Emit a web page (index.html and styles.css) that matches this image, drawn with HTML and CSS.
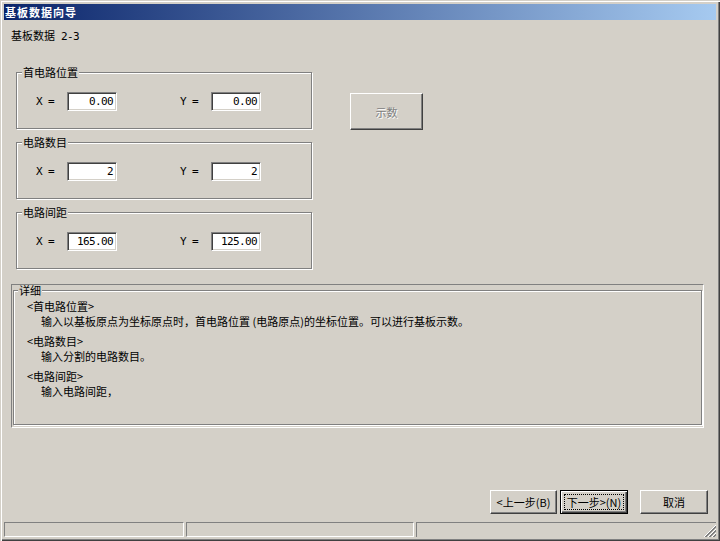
FILE: index.html
```html
<!DOCTYPE html>
<html lang="zh-CN">
<head>
<meta charset="utf-8">
<title>基板数据向导</title>
<link rel="stylesheet" href="styles.css">
</head>
<body>
<div class="window">
  <div class="titlebar"><span class="title">基板数据向导</span></div>
  <div class="client">
    <div class="step">基板数据<span class="lat"> 2-3</span></div>
    <div class="top">
      <div class="groups">
        <fieldset class="group">
          <legend>首电路位置</legend>
          <div class="row">
            <span class="lbl lat">X =</span><div class="edit lat">0.00</div>
            <span class="lbl lbl-y lat">Y =</span><div class="edit lat">0.00</div>
          </div>
        </fieldset>
        <fieldset class="group">
          <legend>电路数目</legend>
          <div class="row">
            <span class="lbl lat">X =</span><div class="edit lat">2</div>
            <span class="lbl lbl-y lat">Y =</span><div class="edit lat">2</div>
          </div>
        </fieldset>
        <fieldset class="group">
          <legend>电路间距</legend>
          <div class="row">
            <span class="lbl lat">X =</span><div class="edit lat">165.00</div>
            <span class="lbl lbl-y lat">Y =</span><div class="edit lat">125.00</div>
          </div>
        </fieldset>
      </div>
      <button class="btn btn-show" disabled>示数</button>
    </div>
    <div class="detail-frame">
      <fieldset class="detail">
        <legend>详细</legend>
        <div class="detail-body">
          <div class="sec">
            <div class="hd">&lt;首电路位置&gt;</div>
            <div class="tx">输入以基板原点为坐标原点时，首电路位置 (电路原点)的坐标位置。可以进行基板示数。</div>
          </div>
          <div class="sec">
            <div class="hd">&lt;电路数目&gt;</div>
            <div class="tx">输入分割的电路数目。</div>
          </div>
          <div class="sec sec-last">
            <div class="hd">&lt;电路间距&gt;</div>
            <div class="tx">输入电路间距，</div>
          </div>
        </div>
      </fieldset>
    </div>
    <div class="actions">
      <button class="btn btn-back">&lt;上一步(B)</button>
      <button class="btn btn-next"><span class="focus">下一步&gt;(N)</span></button>
      <button class="btn btn-cancel">取消</button>
    </div>
  </div>
  <div class="statusbar">
    <div class="panel p1"></div>
    <div class="panel p2"></div>
    <div class="panel p3">
      <svg class="grip" width="12" height="12" viewBox="0 0 12 12" shape-rendering="crispEdges">
        <path d="M12 0 0 12M12 4 4 12M12 8 8 12" stroke="#ffffff" stroke-width="1"/>
        <path d="M12 1 1 12M12 2 2 12M12 5 5 12M12 6 6 12M12 9 9 12M12 10 10 12" stroke="#808080" stroke-width="1"/>
      </svg>
    </div>
  </div>
</div>
</body>
</html>
```
FILE: styles.css
```css
html, body {
  margin: 0;
  padding: 0;
  background: #d4d0c8;
}

body {
  font-family: "Noto Sans CJK SC", "Noto Sans", sans-serif;
  font-size: 11px;
  color: #000;
}

.window {
  width: 720px;
  height: 541px;
  box-sizing: border-box;
  padding: 4px;
  background: #d4d0c8;
  box-shadow: inset 1px 1px #d4d0c8, inset 2px 2px #ffffff, inset -1px -1px #404040, inset -2px -2px #808080;
  display: flex;
  flex-direction: column;
}

.titlebar {
  height: 16px;
  background: linear-gradient(to right, #0a246a, #a6caf0);
  display: flex;
  align-items: center;
  padding-left: 1px;
}

.title {
  color: #fff;
  font-weight: bold;
  font-size: 11px;
  letter-spacing: 1px;
  line-height: 16px;
}

.client {
  flex: 1;
  display: flex;
  flex-direction: column;
  padding: 8px 8px 8px 7px;
  min-height: 0;
}

.step {
  line-height: 14px;
  height: 14px;
}

.lat {
  font-family: "DejaVu Sans Mono", "Liberation Mono", monospace;
  font-size: 11px;
  letter-spacing: -0.62px;
}

.top {
  display: flex;
  align-items: flex-start;
  margin: 23px 0 0 5px;
}

.groups {
  display: flex;
  flex-direction: column;
  gap: 6px;
}

.group {
  width: 296px;
  box-sizing: border-box;
  margin: 0;
  padding: 13px 0 17px 0;
  border: 1px solid #808080;
  box-shadow: inset 1px 1px #ffffff, 1px 1px #ffffff;
  min-width: 0;
}

.group legend,
.detail legend {
  margin-left: 5px;
  padding: 0 1px;
  line-height: 14px;
  background: #d4d0c8;
}

.row {
  display: flex;
  align-items: center;
  padding-left: 19px;
  height: 19px;
}

.lbl {
  width: 31px;
  line-height: 19px;
}

.lbl-y {
  margin-left: 63px;
}

.edit {
  width: 50px;
  height: 19px;
  box-sizing: border-box;
  background: #fff;
  border: 1px solid;
  border-color: #808080 #ffffff #ffffff #808080;
  box-shadow: inset 1px 1px #404040, inset -1px -1px #d4d0c8;
  text-align: right;
  padding-right: 3px;
  line-height: 17px;
}

.btn {
  font-family: "Noto Sans CJK SC", "Noto Sans", sans-serif;
  font-size: 11px;
  color: #000;
  background: #d4d0c8;
  border: 1px solid;
  border-color: #ffffff #404040 #404040 #ffffff;
  box-shadow: inset -1px -1px #808080;
  padding: 0;
  margin: 0;
  box-sizing: border-box;
  display: flex;
  align-items: center;
  justify-content: center;
}

.btn-show {
  width: 73px;
  height: 37px;
  margin: 28px 0 0 38px;
  color: #808080;
  text-shadow: 1px 1px #ffffff;
}

.detail-frame {
  width: 693px;
  height: 144px;
  box-sizing: border-box;
  margin-top: 15px;
  border: 1px solid;
  border-color: #808080 #ffffff #ffffff #808080;
  display: flex;
  flex-direction: column;
}

.detail {
  flex: 1;
  min-width: 0;
  margin: 0 1px 2px 1px;
  padding: 0;
  border: 1px solid #808080;
  box-shadow: inset 1px 1px #ffffff, 1px 1px #ffffff;
}

.detail legend {
  margin-left: 4px;
  line-height: 10px;
}

.detail-body {
  padding: 4px 0 0 13px;
}

.sec {
  margin-bottom: 5px;
}

.hd,
.tx {
  line-height: 15px;
  white-space: nowrap;
}

.tx {
  padding-left: 14px;
}

.actions {
  margin-top: auto;
  display: flex;
  justify-content: flex-end;
  align-items: flex-end;
}

.actions .btn {
  height: 24px;
}

.btn-back {
  width: 67px;
}

.btn-next {
  width: 68px;
  margin-left: 3px;
  border: 1px solid #000;
  box-shadow: inset 1px 1px #ffffff, inset -1px -1px #404040, inset -2px -2px #808080;
}

.focus {
  display: flex;
  align-items: center;
  justify-content: center;
  width: 60px;
  height: 16px;
  box-sizing: border-box;
  border: 1px dotted #000;
}

.btn-cancel {
  width: 68px;
  margin-left: 12px;
}

.statusbar {
  display: flex;
  gap: 2px;
  height: 15px;
}

.panel {
  box-sizing: border-box;
  height: 15px;
  border: 1px solid;
  border-color: #808080 #ffffff #ffffff #808080;
}

.p1 {
  width: 180px;
}

.p2 {
  width: 228px;
}

.p3 {
  flex: 1;
  display: flex;
  justify-content: flex-end;
  align-items: flex-end;
  border-right: 0;
  border-bottom: 0;
}

.grip {
  display: block;
}
```
